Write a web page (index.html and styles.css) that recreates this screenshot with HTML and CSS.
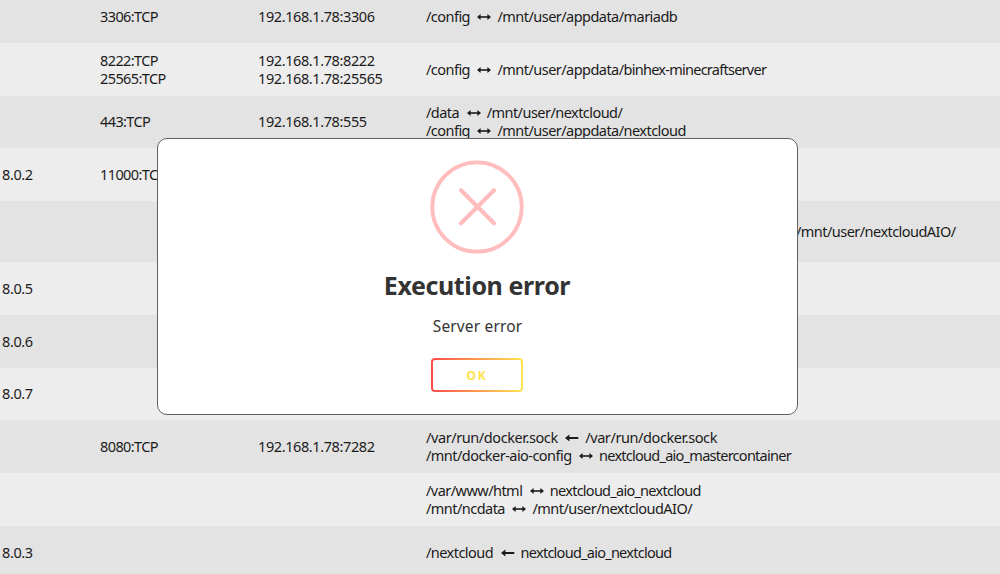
FILE: index.html
```
<!DOCTYPE html>
<html lang="en">
<head>
  <meta charset="UTF-8">
  <meta name="viewport" content="width=device-width, initial-scale=1.0">
  <title>Docker Containers</title>
  <link rel="stylesheet" href="styles.css">
</head>
<body>
  <svg class="sprite" aria-hidden="true">
    <symbol id="both" viewBox="0 0 14 10">
      <path d="M3 5H11" stroke="currentColor" stroke-width="1.6"/>
      <path d="M0 5L3.6 2V8ZM14 5L10.4 2V8Z" fill="currentColor"/>
    </symbol>
    <symbol id="left" viewBox="0 0 14 10">
      <path d="M3 5H13.3" stroke="currentColor" stroke-width="2"/>
      <path d="M0 5L4.4 1.4V8.6Z" fill="currentColor"/>
    </symbol>
  </svg>

  <div class="containers">
    <div class="row">
      <div class="version"></div>
      <div class="port">3306:TCP</div>
      <div class="lan">192.168.1.78:3306</div>
      <div class="paths"><p>/config<svg class="arrow"><use href="#both"/></svg>/mnt/user/appdata/mariadb</p></div>
    </div>
    <div class="row">
      <div class="version"></div>
      <div class="port"><p>8222:TCP</p><p>25565:TCP</p></div>
      <div class="lan"><p>192.168.1.78:8222</p><p>192.168.1.78:25565</p></div>
      <div class="paths"><p>/config<svg class="arrow"><use href="#both"/></svg>/mnt/user/appdata/<span class="name">binhex-minecraftserver</span></p></div>
    </div>
    <div class="row">
      <div class="version"></div>
      <div class="port">443:TCP</div>
      <div class="lan">192.168.1.78:555</div>
      <div class="paths">
        <p>/data<svg class="arrow"><use href="#both"/></svg>/mnt/user/nextcloud/</p>
        <p>/config<svg class="arrow"><use href="#both"/></svg>/mnt/user/appdata/nextcloud</p>
      </div>
    </div>
    <div class="row">
      <div class="version">8.0.2</div>
      <div class="port">11000:TCP</div>
    </div>
    <div class="row tall">
      <div class="version"></div>
      <div class="port"></div>
      <div class="lan"></div>
      <div class="paths"><p class="far">/mnt/user/nextcloudAIO/</p></div>
    </div>
    <div class="row"><div class="version">8.0.5</div></div>
    <div class="row"><div class="version">8.0.6</div></div>
    <div class="row"><div class="version">8.0.7</div></div>
    <div class="row">
      <div class="version"></div>
      <div class="port">8080:TCP</div>
      <div class="lan">192.168.1.78:7282</div>
      <div class="paths">
        <p class="socket">/var/run/docker.sock<svg class="arrow"><use href="#left"/></svg>/var/run/docker.sock</p>
        <p>/mnt/docker-aio-config<svg class="arrow"><use href="#both"/></svg><span class="name">nextcloud_aio_mastercontainer</span></p>
      </div>
    </div>
    <div class="row">
      <div class="version"></div>
      <div class="port"></div>
      <div class="lan"></div>
      <div class="paths">
        <p>/var/www/html<svg class="arrow"><use href="#both"/></svg><span class="name">nextcloud_aio_nextcloud</span></p>
        <p>/mnt/ncdata<svg class="arrow"><use href="#both"/></svg>/mnt/user/nextcloudAIO/</p>
      </div>
    </div>
    <div class="row">
      <div class="version">8.0.3</div>
      <div class="port"></div>
      <div class="lan"></div>
      <div class="paths"><p>/nextcloud<svg class="arrow"><use href="#left"/></svg><span class="name">nextcloud_aio_nextcloud</span></p></div>
    </div>
  </div>

  <div class="alert" role="alertdialog">
    <svg class="error-icon" viewBox="0 0 94 94">
      <circle cx="47" cy="47" r="44.7" fill="none" stroke="#ffbdbd" stroke-width="3.8"/>
      <path d="M31 30.3L64 63.3M64 30.3L31 63.3" stroke="#ffbdbd" stroke-width="4.2" stroke-linecap="round"/>
    </svg>
    <h2>Execution error</h2>
    <p class="message">Server error</p>
    <button class="confirm">OK</button>
  </div>
</body>
</html>
```

FILE: styles.css
```
body {
  margin: 0;
  height: 574px;
  overflow: hidden;
  background-color: #ededed;
  color: #1c1b1b;
  font-family: "Noto Sans", sans-serif;
  font-size: 14.5px;
  line-height: 18px;
}

p {
  margin: 0;
}

.sprite {
  display: none;
}

.containers {
  margin-top: -10px;
}

.row {
  display: grid;
  grid-template-columns: 98px 158px 168px 1fr;
  align-items: center;
  box-sizing: border-box;
  height: 52.8px;
  padding: 0 0 1px 2px;
  white-space: nowrap;
}

.row:nth-child(odd) {
  background-color: #e3e3e3;
}

.row.tall {
  height: 60.8px;
}

.version {
  letter-spacing: -0.4px;
}

.port {
  letter-spacing: -0.6px;
}

.lan {
  letter-spacing: -0.4px;
}

.paths {
  letter-spacing: -0.54px;
}

.name {
  letter-spacing: -0.74px;
}

.socket {
  letter-spacing: -0.42px;
}

.far {
  padding-left: 370px;
}

/* Read/write and read-only mount arrows */
.arrow {
  width: 14px;
  height: 10px;
  margin: 0 6px 0 7.5px;
  vertical-align: 0;
}

/* Dialog sits on top of the container list */
.alert {
  position: absolute;
  top: 138px;
  left: 157px;
  box-sizing: border-box;
  width: 641px;
  height: 277px;
  padding: 21px 1px 0 0;
  display: flex;
  flex-direction: column;
  align-items: center;
  background-color: #fff;
  border: 1px solid #606060;
  border-radius: 10px;
}

.error-icon {
  width: 94px;
  height: 94px;
}

.alert h2 {
  margin: 13px 0 0;
  color: #333;
  font-size: 25px;
  line-height: 36px;
  font-weight: 700;
  letter-spacing: -0.4px;
}

.message {
  margin-top: 12px;
  padding-left: 1px;
  color: #333;
  font-size: 15.5px;
  line-height: 22px;
  letter-spacing: 0.15px;
}

.confirm {
  width: 92px;
  height: 34px;
  margin-top: 21px;
  padding: 0;
  border: 2px solid transparent;
  border-radius: 4px;
  background: linear-gradient(#fff, #fff) padding-box, linear-gradient(90deg, #fb4c4c, #ffe552) border-box;
  color: #fde24b;
  font-family: inherit;
  font-size: 12px;
  font-weight: 700;
  letter-spacing: 1.8px;
}
```
